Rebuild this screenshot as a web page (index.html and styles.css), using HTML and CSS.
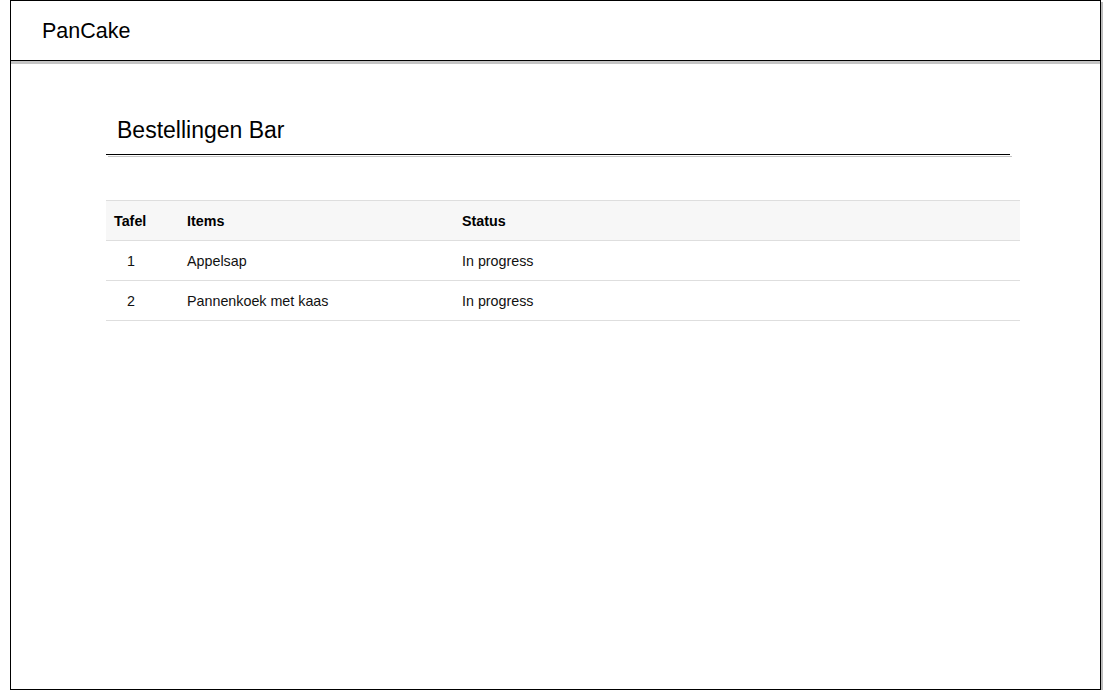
FILE: index.html
```html
<!DOCTYPE html>
<html lang="nl">
<head>
<meta charset="utf-8">
<title>PanCake</title>
<link rel="stylesheet" href="styles.css">
</head>
<body>
<div class="frame">
  <header class="topbar">
    <span class="brand">PanCake</span>
  </header>
  <main class="content">
    <h1 class="title">Bestellingen Bar</h1>
    <div class="rule"></div>
    <table class="orders">
      <colgroup>
        <col class="col-tafel">
        <col class="col-items">
        <col class="col-status">
      </colgroup>
      <thead>
        <tr><th>Tafel</th><th>Items</th><th>Status</th></tr>
      </thead>
      <tbody>
        <tr><td class="num">1</td><td>Appelsap</td><td>In progress</td></tr>
        <tr><td class="num">2</td><td>Pannenkoek met kaas</td><td>In progress</td></tr>
      </tbody>
    </table>
  </main>
</div>
</body>
</html>
```
FILE: styles.css
```css
html, body {
  margin: 0;
  padding: 0;
  background: #fff;
}
body {
  font-family: "Liberation Sans", Arial, sans-serif;
  color: #000;
}
.frame {
  box-sizing: border-box;
  margin-left: 10px;
  width: 1091px;
  height: 690px;
  border: 1px solid #000;
  box-shadow: 2px 2px 0 #bdbdbd;
  display: flex;
  flex-direction: column;
}
.topbar {
  box-sizing: border-box;
  height: 60px;
  border-bottom: 1px solid #000;
  box-shadow: 0 3px 0 #c4c4c4;
  display: flex;
  align-items: center;
  padding-left: 31px;
}
.brand {
  font-size: 21.5px;
  line-height: 26px;
  padding-top: 1px;
}
.content {
  padding: 0 0 0 95px;
}
.title {
  margin: 55px 0 0 0;
  padding-left: 11px;
  font-size: 23px;
  line-height: 28px;
  font-weight: normal;
}
.rule {
  margin-top: 10px;
  width: 904px;
  height: 0;
  border-top: 1px solid #000;
  box-shadow: 2px 2px 0 #c4c4c4;
}
.orders {
  margin-top: 45px;
  width: 914px;
  table-layout: fixed;
  border-collapse: separate;
  border-spacing: 0;
  font-size: 14.3px;
  line-height: 19px;
  color: #111;
}
.col-tafel { width: 73px; }
.col-items { width: 275px; }
.orders th,
.orders td {
  text-align: left;
  padding: 11px 8px 9px;
  border-top: 1px solid #dedede;
}
.orders th {
  font-weight: bold;
  background: #f7f7f7;
  color: #000;
}
.orders tbody tr:last-child td {
  border-bottom: 1px solid #dedede;
}
.orders td.num {
  padding-left: 21px;
}
```
